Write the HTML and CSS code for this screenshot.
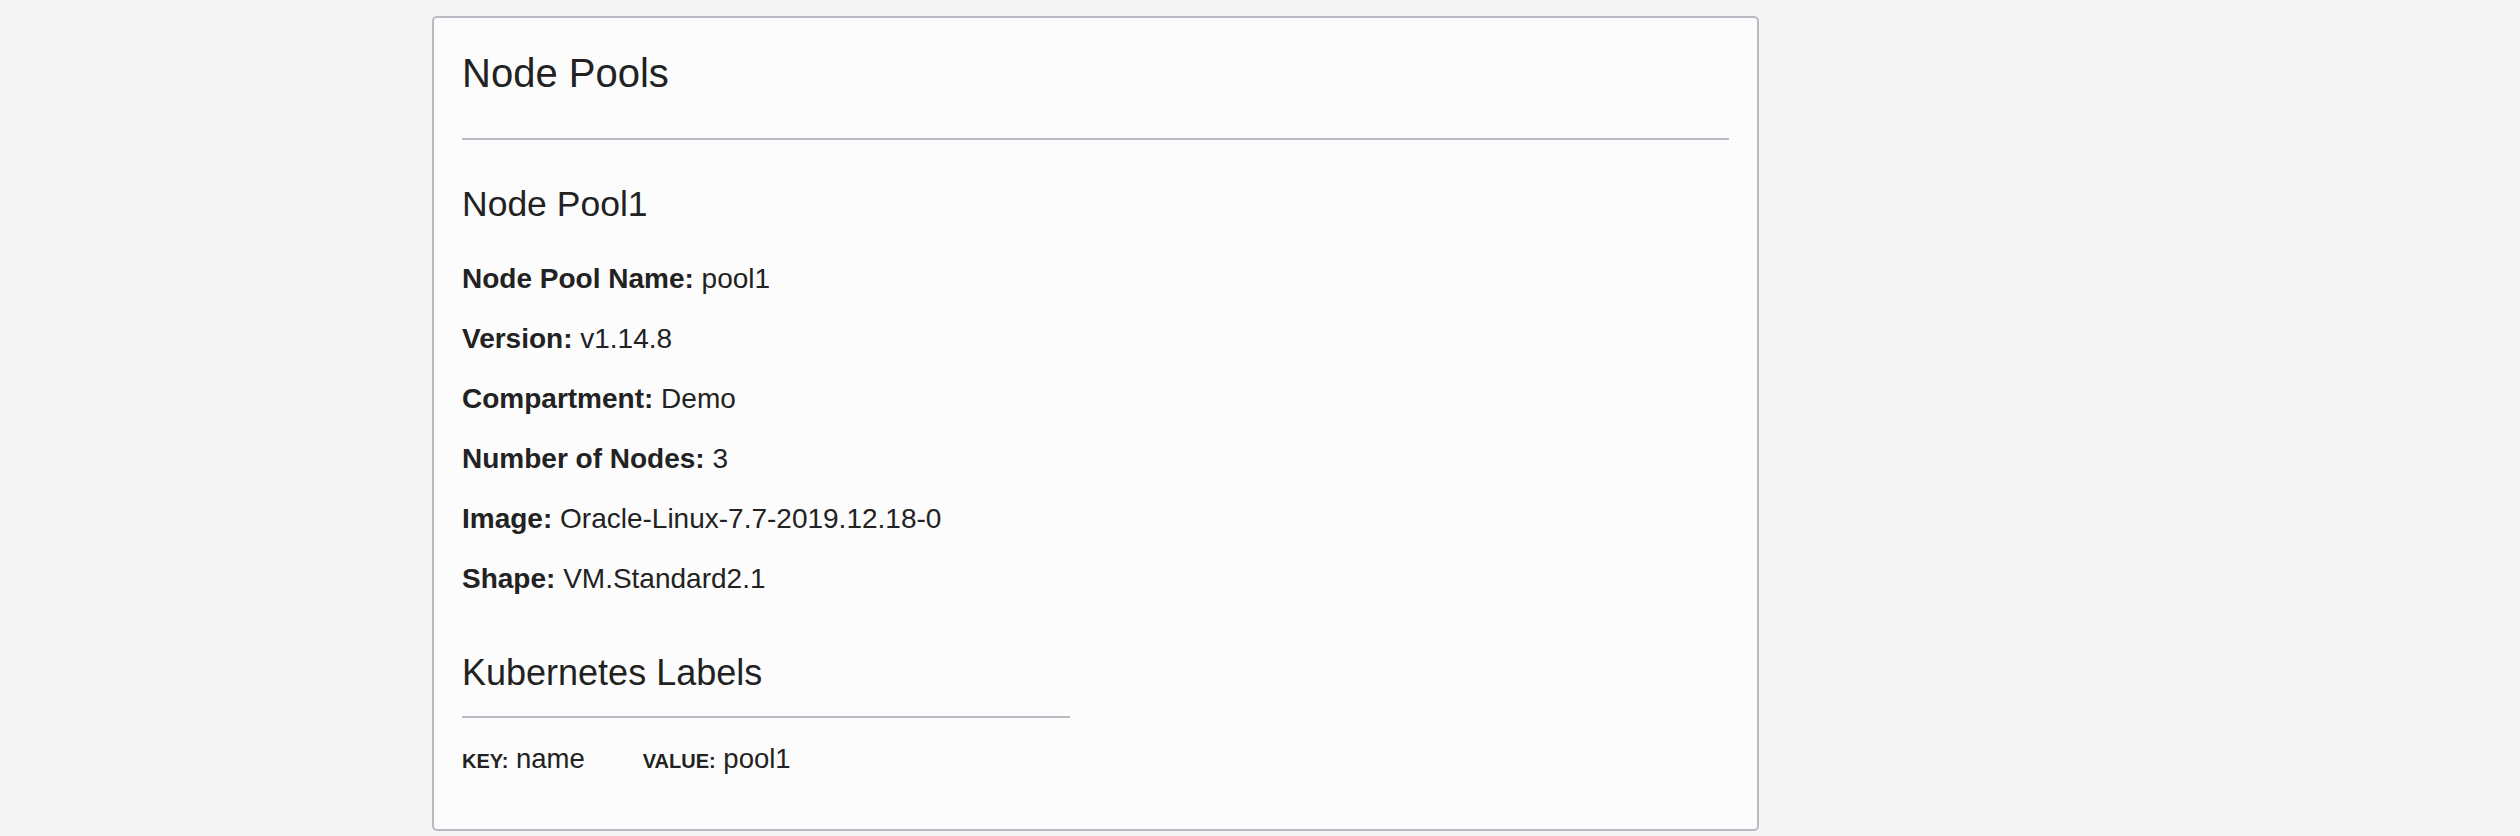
FILE: index.html
```html
<!DOCTYPE html>
<html lang="en">
<head>
<meta charset="utf-8">
<title>Node Pools</title>
<link rel="stylesheet" href="styles.css">
</head>
<body>
<main class="page">
  <section class="card">
    <h1 class="card-title">Node Pools</h1>
    <hr class="divider">
    <h2 class="pool-title">Node Pool1</h2>
    <p class="field"><strong>Node Pool Name:</strong> pool1</p>
    <p class="field"><strong>Version:</strong> v1.14.8</p>
    <p class="field"><strong>Compartment:</strong> Demo</p>
    <p class="field"><strong>Number of Nodes:</strong> 3</p>
    <p class="field"><strong>Image:</strong> Oracle-Linux-7.7-2019.12.18-0</p>
    <p class="field"><strong>Shape:</strong> VM.Standard2.1</p>
    <h2 class="labels-title">Kubernetes Labels</h2>
    <hr class="divider divider-short">
    <div class="label-row">
      <span class="pair"><span class="pair-key">KEY:</span> name</span>
      <span class="pair"><span class="pair-key">VALUE:</span> pool1</span>
    </div>
  </section>
</main>
</body>
</html>
```
FILE: styles.css
```css
html, body {
  margin: 0;
  padding: 0;
}
body {
  background: #f4f4f4;
  color: #222222;
  font-family: "Liberation Sans", Arial, Helvetica, sans-serif;
}
.page {
  padding: 16px 0 0 432px;
}
.card {
  box-sizing: border-box;
  width: 1327px;
  background: #fcfcfc;
  border: 2px solid #b8bcc2;
  border-radius: 5px;
  padding: 31px 28px 50px 28px;
}
.card-title {
  margin: 0;
  font-size: 40px;
  line-height: 48px;
  font-weight: 400;
}
.divider {
  border: 0;
  border-top: 2px solid #b8bcc2;
  height: 0;
  margin: 41px 0 0 0;
}
.pool-title {
  margin: 43px 0 0 0;
  font-size: 35.5px;
  line-height: 42px;
  font-weight: 400;
}
.field {
  margin: 0 0 24px 0;
  font-size: 28px;
  line-height: 36px;
}
.pool-title + .field {
  margin-top: 36px;
}
.field strong {
  font-weight: 700;
}
.labels-title {
  margin: 55px 0 0 0;
  font-size: 36px;
  line-height: 42px;
  font-weight: 400;
}
.divider-short {
  width: 608px;
  margin-top: 22px;
}
.label-row {
  margin-top: 23px;
  font-size: 27.5px;
  line-height: 36px;
  display: flex;
  gap: 58px;
}
.pair-key {
  font-size: 20px;
  font-weight: 700;
  text-transform: uppercase;
}
```
